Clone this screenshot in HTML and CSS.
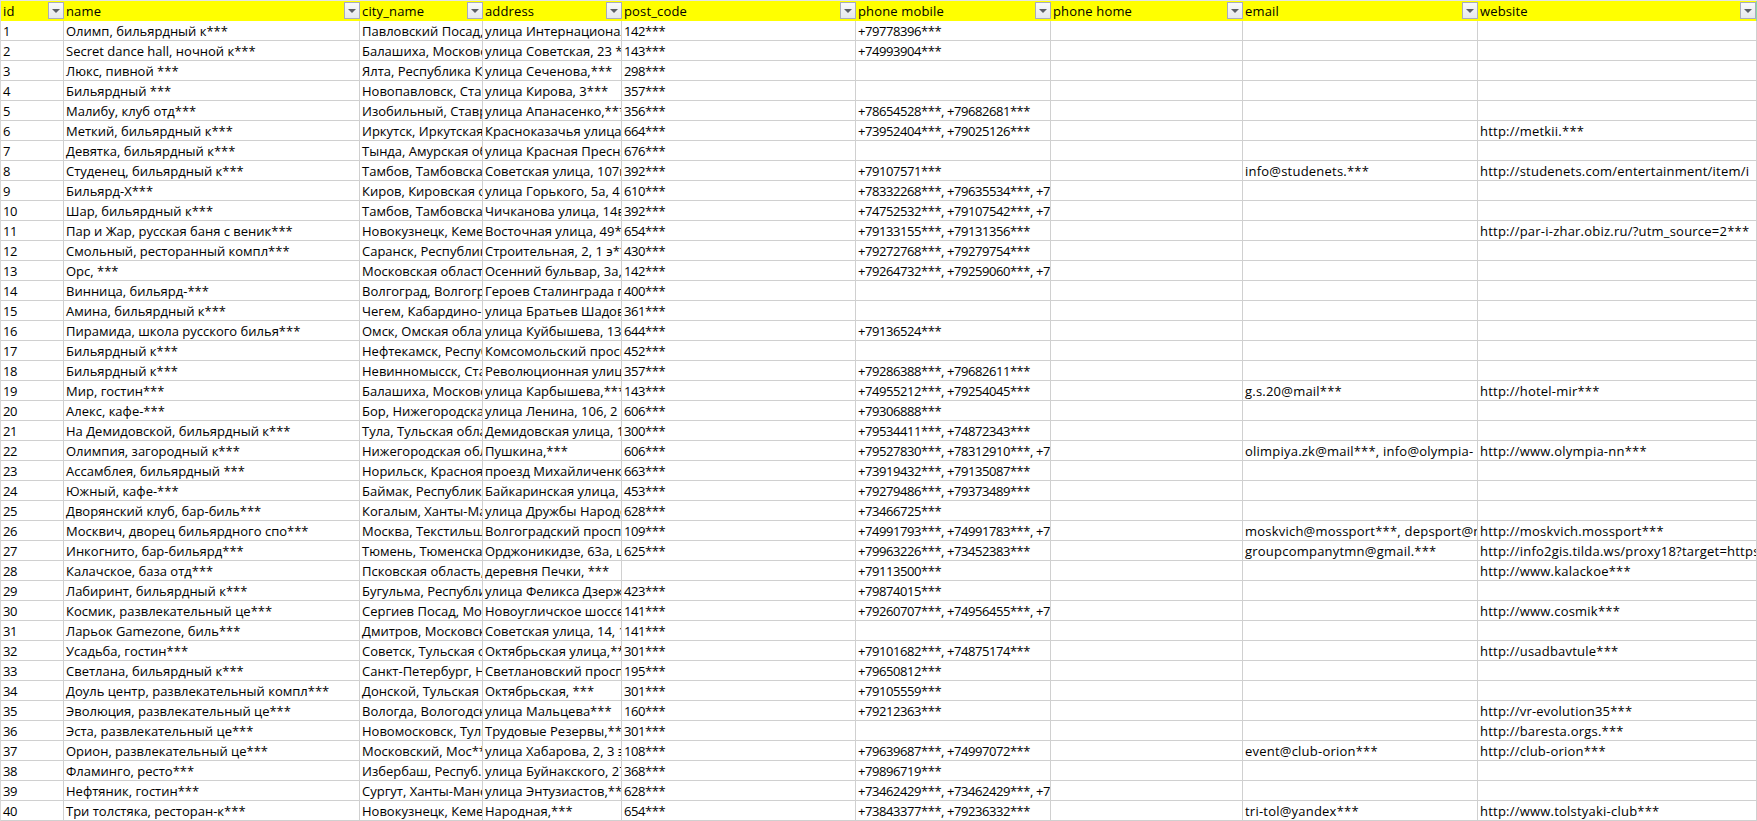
FILE: index.html
```html
<!DOCTYPE html>
<html lang="ru">
<head>
<meta charset="utf-8">
<title>Таблица</title>
<link rel="stylesheet" href="styles.css">
</head>
<body>
<table class="sheet">
<colgroup>
<col class="c-id"><col class="c-name"><col class="c-city"><col class="c-addr"><col class="c-post"><col class="c-mob"><col class="c-home"><col class="c-mail"><col class="c-web">
</colgroup>
<thead>
<tr>
<th><div class="hd"><span>id</span><i class="fb"></i></div></th>
<th><div class="hd"><span>name</span><i class="fb"></i></div></th>
<th><div class="hd"><span>city_name</span><i class="fb"></i></div></th>
<th><div class="hd"><span>address</span><i class="fb"></i></div></th>
<th><div class="hd"><span>post_code</span><i class="fb"></i></div></th>
<th><div class="hd"><span>phone mobile</span><i class="fb"></i></div></th>
<th><div class="hd"><span>phone home</span><i class="fb"></i></div></th>
<th><div class="hd"><span>email</span><i class="fb"></i></div></th>
<th class="last"><div class="hd"><span>website</span><i class="fb"></i></div></th>
</tr>
</thead>
<tbody>
<tr><td>1</td><td>Олимп, бильярдный к***</td><td>Павловский Посад, Московская</td><td>улица Интернациональная</td><td>142***</td><td>+79778396***</td><td></td><td></td><td></td></tr>
<tr><td>2</td><td>Secret dance hall, ночной к***</td><td>Балашиха, Московская</td><td>улица Советская, 23 ***</td><td>143***</td><td>+74993904***</td><td></td><td></td><td></td></tr>
<tr><td>3</td><td>Люкс, пивной ***</td><td>Ялта, Республика Крым</td><td>улица Сеченова,***</td><td>298***</td><td></td><td></td><td></td><td></td></tr>
<tr><td>4</td><td>Бильярдный ***</td><td>Новопавловск, Ставропольский</td><td>улица Кирова, 3***</td><td>357***</td><td></td><td></td><td></td><td></td></tr>
<tr><td>5</td><td>Малибу, клуб отд***</td><td>Изобильный, Ставропольский</td><td>улица Апанасенко,***</td><td>356***</td><td>+78654528***, +79682681***</td><td></td><td></td><td></td></tr>
<tr><td>6</td><td>Меткий, бильярдный к***</td><td>Иркутск, Иркутская область</td><td>Красноказачья улица, 1</td><td>664***</td><td>+73952404***, +79025126***</td><td></td><td></td><td>http://metkii.***</td></tr>
<tr><td>7</td><td>Девятка, бильярдный к***</td><td>Тында, Амурская область</td><td>улица Красная Пресня</td><td>676***</td><td></td><td></td><td></td><td></td></tr>
<tr><td>8</td><td>Студенец, бильярдный к***</td><td>Тамбов, Тамбовская область</td><td>Советская улица, 107г</td><td>392***</td><td>+79107571***</td><td></td><td>info@studenets.***</td><td>http://studenets.com/entertainment/item/i</td></tr>
<tr><td>9</td><td>Бильярд-Х***</td><td>Киров, Кировская область</td><td>улица Горького, 5а, 4</td><td>610***</td><td>+78332268***, +79635534***, +79</td><td></td><td></td><td></td></tr>
<tr><td>10</td><td>Шар, бильярдный к***</td><td>Тамбов, Тамбовская область</td><td>Чичканова улица, 14в</td><td>392***</td><td>+74752532***, +79107542***, +79</td><td></td><td></td><td></td></tr>
<tr><td>11</td><td>Пар и Жар, русская баня с веник***</td><td>Новокузнецк, Кемеровская</td><td>Восточная улица, 49***</td><td>654***</td><td>+79133155***, +79131356***</td><td></td><td></td><td>http://par-i-zhar.obiz.ru/?utm_source=2***</td></tr>
<tr><td>12</td><td>Смольный, ресторанный компл***</td><td>Саранск, Республика</td><td>Строительная, 2, 1 э***</td><td>430***</td><td>+79272768***, +79279754***</td><td></td><td></td><td></td></tr>
<tr><td>13</td><td>Орс, ***</td><td>Московская область</td><td>Осенний бульвар, 3а,</td><td>142***</td><td>+79264732***, +79259060***, +79</td><td></td><td></td><td></td></tr>
<tr><td>14</td><td>Винница, бильярд-***</td><td>Волгоград, Волгоградская</td><td>Героев Сталинграда пр</td><td>400***</td><td></td><td></td><td></td><td></td></tr>
<tr><td>15</td><td>Амина, бильярдный к***</td><td>Чегем, Кабардино-Балкарская</td><td>улица Братьев Шадовых</td><td>361***</td><td></td><td></td><td></td><td></td></tr>
<tr><td>16</td><td>Пирамида, школа русского билья***</td><td>Омск, Омская область</td><td>улица Куйбышева, 13</td><td>644***</td><td>+79136524***</td><td></td><td></td><td></td></tr>
<tr><td>17</td><td>Бильярдный к***</td><td>Нефтекамск, Республика</td><td>Комсомольский проспект</td><td>452***</td><td></td><td></td><td></td><td></td></tr>
<tr><td>18</td><td>Бильярдный к***</td><td>Невинномысск, Ставропольский</td><td>Революционная улица</td><td>357***</td><td>+79286388***, +79682611***</td><td></td><td></td><td></td></tr>
<tr><td>19</td><td>Мир, гостин***</td><td>Балашиха, Московская</td><td>улица Карбышева,***</td><td>143***</td><td>+74955212***, +79254045***</td><td></td><td>g.s.20@mail***</td><td>http://hotel-mir***</td></tr>
<tr><td>20</td><td>Алекс, кафе-***</td><td>Бор, Нижегородская область</td><td>улица Ленина, 106, 2 этаж</td><td>606***</td><td>+79306888***</td><td></td><td></td><td></td></tr>
<tr><td>21</td><td>На Демидовской, бильярдный к***</td><td>Тула, Тульская область</td><td>Демидовская улица, 15</td><td>300***</td><td>+79534411***, +74872343***</td><td></td><td></td><td></td></tr>
<tr><td>22</td><td>Олимпия, загородный к***</td><td>Нижегородская обл.</td><td>Пушкина,***</td><td>606***</td><td>+79527830***, +78312910***, +79</td><td></td><td>olimpiya.zk@mail***, info@olympia-</td><td>http://www.olympia-nn***</td></tr>
<tr><td>23</td><td>Ассамблея, бильярдный ***</td><td>Норильск, Красноярский</td><td>проезд Михайличенко</td><td>663***</td><td>+73919432***, +79135087***</td><td></td><td></td><td></td></tr>
<tr><td>24</td><td>Южный, кафе-***</td><td>Баймак, Республика</td><td>Байкаринская улица, 1</td><td>453***</td><td>+79279486***, +79373489***</td><td></td><td></td><td></td></tr>
<tr><td>25</td><td>Дворянский клуб, бар-биль***</td><td>Когалым, Ханты-Мансийский</td><td>улица Дружбы Народов</td><td>628***</td><td>+73466725***</td><td></td><td></td><td></td></tr>
<tr><td>26</td><td>Москвич, дворец бильярдного спо***</td><td>Москва, Текстильщики</td><td>Волгоградский проспект</td><td>109***</td><td>+74991793***, +74991783***, +79</td><td></td><td>moskvich@mossport***, depsport@m</td><td>http://moskvich.mossport***</td></tr>
<tr><td>27</td><td>Инкогнито, бар-бильярд***</td><td>Тюмень, Тюменская область</td><td>Орджоникидзе, 63а, ц</td><td>625***</td><td>+79963226***, +73452383***</td><td></td><td>groupcompanytmn@gmail.***</td><td>http://info2gis.tilda.ws/proxy18?target=https</td></tr>
<tr><td>28</td><td>Калачское, база отд***</td><td>Псковская область,</td><td>деревня Печки, ***</td><td></td><td>+79113500***</td><td></td><td></td><td>http://www.kalackoe***</td></tr>
<tr><td>29</td><td>Лабиринт, бильярдный к***</td><td>Бугульма, Республика</td><td>улица Феликса Дзержинского</td><td>423***</td><td>+79874015***</td><td></td><td></td><td></td></tr>
<tr><td>30</td><td>Космик, развлекательный це***</td><td>Сергиев Посад, Московская</td><td>Новоугличское шоссе</td><td>141***</td><td>+79260707***, +74956455***, +79</td><td></td><td></td><td>http://www.cosmik***</td></tr>
<tr><td>31</td><td>Ларьок Gamezone, биль***</td><td>Дмитров, Московская</td><td>Советская улица, 14, 1</td><td>141***</td><td></td><td></td><td></td><td></td></tr>
<tr><td>32</td><td>Усадьба, гостин***</td><td>Советск, Тульская область</td><td>Октябрьская улица,***</td><td>301***</td><td>+79101682***, +74875174***</td><td></td><td></td><td>http://usadbavtule***</td></tr>
<tr><td>33</td><td>Светлана, бильярдный к***</td><td>Санкт-Петербург, Нева</td><td>Светлановский проспект</td><td>195***</td><td>+79650812***</td><td></td><td></td><td></td></tr>
<tr><td>34</td><td>Доуль центр, развлекательный компл***</td><td>Донской, Тульская</td><td>Октябрьская, ***</td><td>301***</td><td>+79105559***</td><td></td><td></td><td></td></tr>
<tr><td>35</td><td>Эволюция, развлекательный це***</td><td>Вологда, Вологодская</td><td>улица Мальцева***</td><td>160***</td><td>+79212363***</td><td></td><td></td><td>http://vr-evolution35***</td></tr>
<tr><td>36</td><td>Эста, развлекательный це***</td><td>Новомосковск, Тульская</td><td>Трудовые Резервы,***</td><td>301***</td><td></td><td></td><td></td><td>http://baresta.orgs.***</td></tr>
<tr><td>37</td><td>Орион, развлекательный це***</td><td>Московский, Мос***</td><td>улица Хабарова, 2, 3 этаж</td><td>108***</td><td>+79639687***, +74997072***</td><td></td><td>event@club-orion***</td><td>http://club-orion***</td></tr>
<tr><td>38</td><td>Фламинго, ресто***</td><td>Избербаш, Респуб.</td><td>улица Буйнакского, 27</td><td>368***</td><td>+79896719***</td><td></td><td></td><td></td></tr>
<tr><td>39</td><td>Нефтяник, гостин***</td><td>Сургут, Ханты-Мансийский</td><td>улица Энтузиастов,***</td><td>628***</td><td>+73462429***, +73462429***, +79</td><td></td><td></td><td></td></tr>
<tr><td>40</td><td>Три толстяка, ресторан-к***</td><td>Новокузнецк, Кемеровская</td><td>Народная,***</td><td>654***</td><td>+73843377***, +79236332***</td><td></td><td>tri-tol@yandex***</td><td>http://www.tolstyaki-club***</td></tr>
</tbody>
</table>
</body>
</html>
```
FILE: styles.css
```css
html, body {
  margin: 0;
  background: #fff;
}
body {
  border-top: 1px solid #e4e4e4;
  border-left: 1px solid #d8d8d8;
  overflow: hidden;
}
.sheet {
  table-layout: fixed;
  border-collapse: separate;
  border-spacing: 0;
  width: 1756px;
  font-family: "Open Sans", "Noto Sans", sans-serif;
  font-size: 13px;
  color: #000;
}
.c-id { width: 63px; }
.c-name { width: 296px; }
.c-city { width: 123px; }
.c-addr { width: 139px; }
.c-post { width: 234px; }
.c-mob { width: 195px; }
.c-home { width: 192px; }
.c-mail { width: 235px; }
.c-web { width: 279px; }
th, td {
  padding: 0 0 0 2px;
  height: 20px;
  box-sizing: border-box;
  overflow: hidden;
  white-space: nowrap;
  text-align: left;
  font-weight: 400;
  line-height: 18px;
  vertical-align: bottom;
}
td {
  border-right: 1px solid #d0d0d0;
  border-bottom: 1px solid #d0d0d0;
}
td:nth-child(1), td:nth-child(5), td:nth-child(6) {
  letter-spacing: -0.44px;
}
td:nth-child(8), td:nth-child(9) {
  letter-spacing: 0.22px;
}
th {
  background: #ffff00;
  letter-spacing: 0.15px;
}
th.last {
  border-right: 1px solid #86d9a9;
}
.hd {
  display: flex;
  justify-content: space-between;
  align-items: flex-start;
  height: 20px;
  line-height: 20px;
}
.fb {
  flex: none;
  width: 16px;
  height: 17px;
  margin-top: 1px;
  box-sizing: border-box;
  border: 1px solid #a8acbc;
  background: linear-gradient(#f8f9fa, #e6e8ec);
  display: flex;
  align-items: center;
  justify-content: center;
}
.fb::after {
  content: "";
  border-left: 4px solid transparent;
  border-right: 4px solid transparent;
  border-top: 4px solid #5c5f66;
}
```
